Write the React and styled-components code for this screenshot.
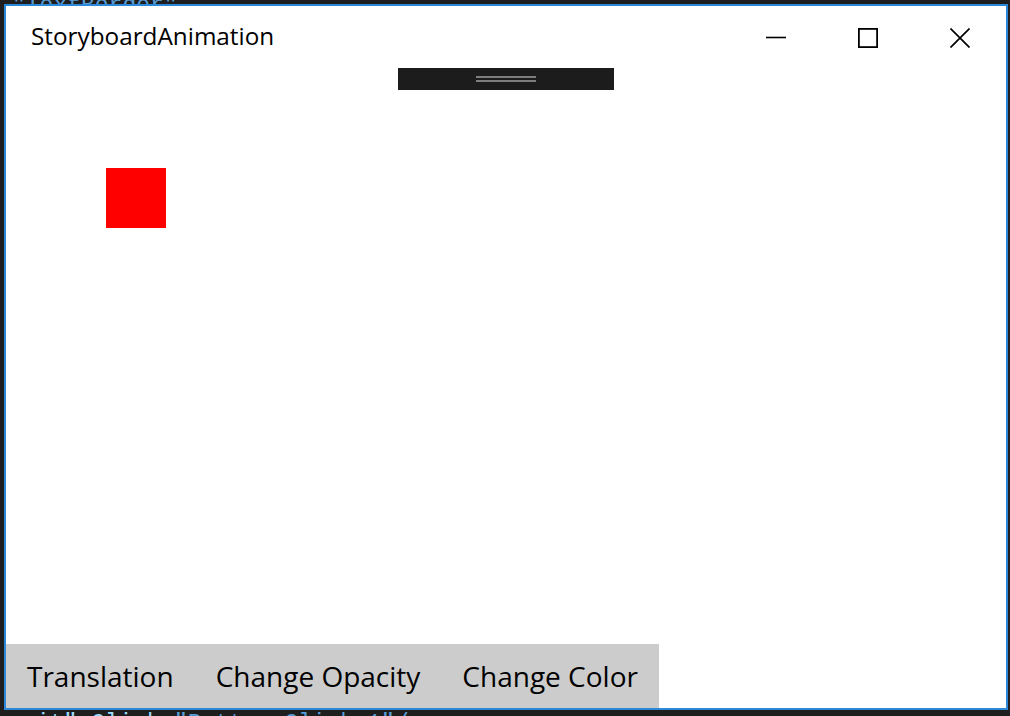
import React from "react";
import styled, { createGlobalStyle } from "styled-components";

const Global = createGlobalStyle`
  html, body { margin: 0; padding: 0; background: #1e1e1e; }
  body { width: 1010px; height: 716px; overflow: hidden; font-family: "Open Sans", "Noto Sans", sans-serif; }
  #root { width: 1010px; height: 716px; }
`;

const Desktop = styled.div`
  width: 1010px;
  height: 716px;
  display: flex;
  flex-direction: column;
  background: #1e1e1e;
  overflow: hidden;
`;

const CodeStrip = styled.div`
  height: ${(p) => p.$h}px;
  flex: none;
  overflow: hidden;
  display: flex;
  align-items: ${(p) => (p.$top ? "flex-end" : "flex-start")};
  padding-left: ${(p) => p.$indent}px;
`;

const CodeLine = styled.span`
  font-family: "Liberation Mono", "DejaVu Sans Mono", monospace;
  font-size: 23px;
  line-height: 23px;
  white-space: pre;
  color: #569cd6;
  margin-bottom: ${(p) => p.$mb || 0}px;
  margin-top: ${(p) => p.$mt || 0}px;
`;

const Attr = styled.span`
  color: ${(p) => p.$c};
`;

const Window = styled.div`
  margin: 0 2px 0 4px;
  width: 1000px;
  height: 702px;
  flex: none;
  border: 2px solid #2b88d8;
  background: #ffffff;
  display: flex;
  flex-direction: column;
  position: relative;
`;

const TitleBar = styled.div`
  height: 64px;
  flex: none;
  display: flex;
  align-items: center;
`;

const Title = styled.div`
  flex: 1;
  padding-left: 25px;
  padding-bottom: 6px;
  font-size: 24.3px;
  color: #000;
`;

const CaptionButton = styled.div`
  width: 92px;
  height: 64px;
  display: flex;
  align-items: center;
  justify-content: center;
`;

const DebugBar = styled.div`
  position: absolute;
  left: 392px;
  top: 62px;
  width: 216px;
  height: 22px;
  background: #1c1c1c;
  display: flex;
  flex-direction: column;
  align-items: center;
  justify-content: center;
  gap: 2px;
  z-index: 2;
`;

const Grip = styled.div`
  width: 60px;
  height: 2px;
  background: #7d7d7d;
`;

const Content = styled.div`
  flex: 1;
  padding: 98px 0 0 100px;
`;

const Square = styled.div`
  width: 60px;
  height: 60px;
  background: #ff0000;
`;

const ButtonBar = styled.div`
  display: flex;
  height: 64px;
  flex: none;
`;

const ActionButton = styled.div`
  background: #cccccc;
  padding: 0 21px 1px;
  display: flex;
  align-items: center;
  font-size: 28px;
  color: #000;
`;

const Minimize = () => (
  <svg width="20" height="20" viewBox="0 0 20 20">
    <line x1="0" y1="9.5" x2="20" y2="9.5" stroke="#000" strokeWidth="1.6" />
  </svg>
);
const Maximize = () => (
  <svg width="20" height="20" viewBox="0 0 20 20">
    <rect x="0.9" y="0.9" width="18.2" height="18.2" fill="none" stroke="#000" strokeWidth="1.8" />
  </svg>
);
const Close = () => (
  <svg width="20" height="20" viewBox="0 0 20 20">
    <path d="M0.5 0.5 L19.5 19.5 M19.5 0.5 L0.5 19.5" stroke="#000" strokeWidth="1.7" />
  </svg>
);

export default function App() {
  return (
    <>
      <Global />
      <Desktop>
        <CodeStrip $h={4} $top $indent={12}>
          <CodeLine $mb={-14}>"TextBorder"</CodeLine>
        </CodeStrip>
        <Window>
          <TitleBar>
            <Title>StoryboardAnimation</Title>
            <CaptionButton><Minimize /></CaptionButton>
            <CaptionButton><Maximize /></CaptionButton>
            <CaptionButton><Close /></CaptionButton>
          </TitleBar>
          <DebugBar>
            <Grip />
            <Grip />
          </DebugBar>
          <Content>
            <Square />
          </Content>
          <ButtonBar>
            <ActionButton>Translation</ActionButton>
            <ActionButton>Change Opacity</ActionButton>
            <ActionButton>Change Color</ActionButton>
          </ButtonBar>
        </Window>
        <CodeStrip $h={6} $indent={36}>
          <CodeLine $mt={3}>
            <Attr $c="#9cdcfe">it" Click</Attr>
            <Attr $c="#d4d4d4">=</Attr>
            <Attr $c="#569cd6">"Button_Click_1"</Attr>/&gt;
          </CodeLine>
        </CodeStrip>
      </Desktop>
    </>
  );
}
